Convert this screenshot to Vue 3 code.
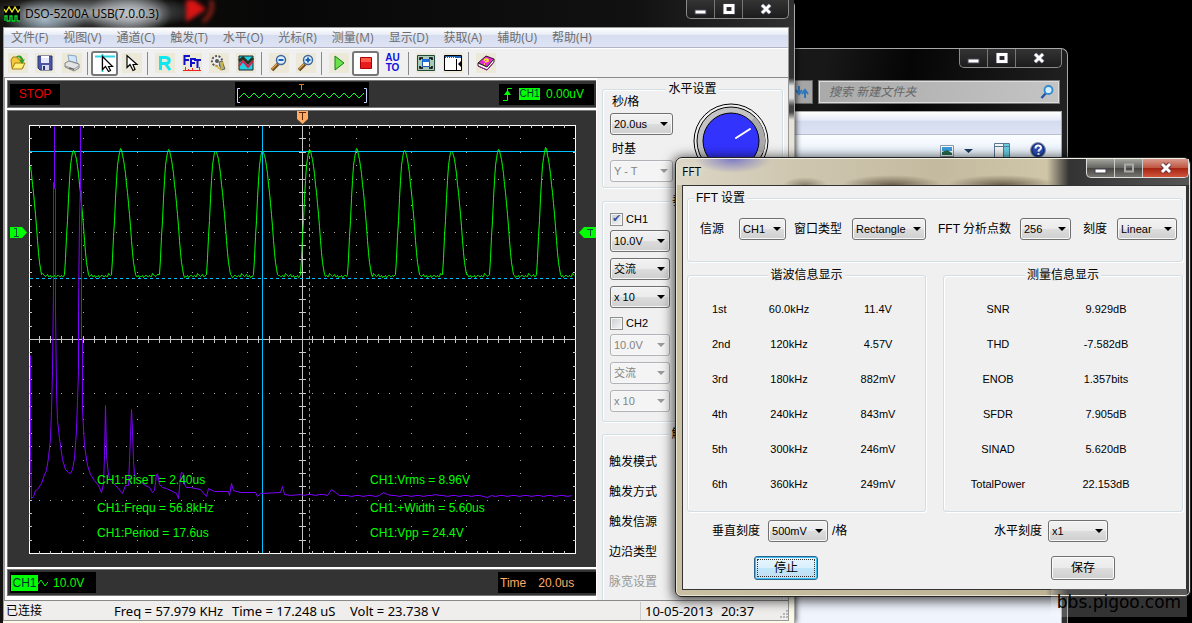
<script setup>
import { ref } from 'vue'

const menus = ['文件(F)', '视图(V)', '通道(C)', '触发(T)', '水平(O)', '光标(R)', '测量(M)', '显示(D)', '获取(A)', '辅助(U)', '帮助(H)']

const harmonics = [
  ['1st', '60.0kHz', '11.4V'],
  ['2nd', '120kHz', '4.57V'],
  ['3rd', '180kHz', '882mV'],
  ['4th', '240kHz', '843mV'],
  ['5th', '300kHz', '246mV'],
  ['6th', '360kHz', '249mV'],
]
const measures = [
  ['SNR', '9.929dB'],
  ['THD', '-7.582dB'],
  ['ENOB', '1.357bits'],
  ['SFDR', '7.905dB'],
  ['SINAD', '5.620dB'],
  ['TotalPower', '22.153dB'],
]
const triggerLabels = ['触发模式', '触发方式', '触发信源', '边沿类型']
const ch1 = ref(true)
const ch2 = ref(false)

// Graticule: 10 x 8 divisions, 5 and 4 minor steps in each
const left = 29, top = 125
const xs = Array.from({ length: 49 }, (_, i) => Math.round(left - 1 + (i + 1) * 10.94))
const ys = Array.from({ length: 31 }, (_, i) => Math.round(top + (i + 1) * 13.38))
let ticks = ''
for (const x of xs) ticks += `M${x}.5 125v3M${x}.5 336v7M${x}.5 551v3`
for (const y of ys) ticks += `M29 ${y}.5h3M299 ${y}.5h7M573 ${y}.5h3`
let dots = ''
xs.forEach((x, i) => {
  ys.forEach((y, j) => {
    const onCol = (i + 1) % 5 === 0 && i !== 24
    const onRow = (j + 1) % 4 === 0 && j !== 15
    if (onCol || onRow) dots += `M${x} ${y}.5h1`
  })
})

// Channel 1: pulses rising and falling around each peak, small ripple between
const pulse = [[-9, 274], [-8, 258], [-7, 236], [-6, 220], [-5, 198], [-4, 180], [-3, 165], [-2, 158], [-1, 152], [0, 0], [1, 1], [2, 155], [3, 159], [4, 166], [5, 173], [6, 184], [7, 192], [8, 203], [9, 214], [10, 226], [11, 240], [12, 252], [13, 262], [14, 268], [15, 274]]
const tops = [150, 150, 148, 149, 151, 151, 149, 148, 150, 151, 149, 147]
const ripple = [273, 274, 275, 276, 275, 274, 276, 276, 275, 277, 276, 276, 275, 277, 276, 275, 275, 276, 276, 275, 276, 276]
const wave = []
tops.forEach((peakY, n) => {
  const cx = Math.round(26 + n * 47.2)
  for (const [dx, y] of pulse) {
    const x = cx + dx
    if (x >= 30 && x <= 574) wave.push(`${x}.5,${y < 2 ? peakY + y : y}.5`)
  }
  for (let k = 0; k < 22; k++) {
    const x = cx + 16 + k
    if (x <= 574) wave.push(`${x}.5,${ripple[(k + n * 3) % 22]}.5`)
  }
})
const wavePoints = wave.join(' ')

const spectrumHead = [
  [30, 355], [30, 450], [31, 498], [33, 496], [35, 490], [37, 489], [41, 483], [44, 474], [46, 470], [48, 457], [50, 438], [51, 410], [52, 370],
  [53, 290], [53, 182], [54, 182], [54, 126], [54, 188], [55, 188], [55, 310], [56, 390], [57, 420], [59, 438], [62, 459], [65, 469], [68, 472], [70, 473],
  [72, 469], [74, 458], [76, 430], [77, 400], [78, 370], [78, 310], [79, 220], [80, 184], [80, 126], [80, 190], [81, 190], [81, 338], [82, 338], [82, 410], [84, 445], [87, 465],
  [90, 474], [94, 480], [98, 485], [101, 492], [103, 483], [104, 455], [105, 405], [106, 455], [108, 475], [110, 480], [114, 484],
  [118, 488], [122, 493], [125, 485], [128, 485], [129, 460], [130, 435], [131, 409], [132, 430], [133, 460], [134, 475], [138, 480],
  [145, 485], [149, 487], [152, 492], [154, 490], [156, 474], [157, 473], [159, 484], [162, 487], [166, 488], [172, 491], [176, 493],
  [178, 498], [180, 476], [181, 472], [183, 473], [184, 484], [186, 487], [190, 487], [200, 489], [206, 496], [208, 488], [214, 491],
  [228, 491], [229, 495], [231, 483], [233, 490], [240, 492], [255, 492], [257, 496], [260, 493], [280, 492], [282, 486], [284, 494],
  [290, 495], [300, 494],
]
const bumps = { 331: -5, 335: -2, 383: -3, 387: -2, 435: -2, 487: 2 }
const tail = []
for (let x = 303; x <= 571; x += 4) {
  tail.push([x, (x < 340 ? 494 : 495) + (bumps[x] || 0) + ((x * 7) % 3 === 0 ? 1 : 0)])
}
const spectrumPoints = [...spectrumHead, ...tail].map(([x, y]) => `${x}.5,${y}.5`).join(' ')

const readouts = [
  [97, 484, 'CH1:RiseT = 2.40us'], [370, 484, 'CH1:Vrms = 8.96V'],
  [97, 512, 'CH1:Frequ = 56.8kHz'], [370, 512, 'CH1:+Width = 5.60us'],
  [97, 537, 'CH1:Period = 17.6us'], [370, 537, 'CH1:Vpp = 24.4V'],
]
const preview = Array.from({ length: 26 }, (_, i) => `${4 + i * 5},${i % 2 ? 11 : 16}`).join(' ')
</script>

<template>
  <main class="desktop">
    <!-- File browser -->
    <section class="explorer">
      <div class="caption">
        <button type="button" aria-label="最小化"><svg width="14" height="12"><rect x="1" y="7" width="11" height="4" fill="#fff" stroke="#445" /></svg></button>
        <button type="button" aria-label="最大化"><svg width="14" height="12"><path d="M3 2.500h8v7H3z" fill="none" stroke="#445" stroke-width="4" /><path d="M3 2.500h8v7H3z" fill="none" stroke="#fff" stroke-width="3" /></svg></button>
        <button type="button" class="close" aria-label="关闭"><svg width="14" height="12"><path d="M3 2l8 8M11 2l-8 8" stroke="#445" stroke-width="5" /><path d="M3 2l8 8M11 2l-8 8" stroke="#fff" stroke-width="3" /></svg></button>
      </div>
      <div class="address">
        <button type="button" class="refresh" aria-label="刷新"><svg width="14" height="16"><path d="M4 2v7M1 6l3 4 3-4M10 14V8M7 10l3-4 3 4" fill="none" stroke="#2f77bd" stroke-width="2" /></svg></button>
        <div class="search">
          <input type="text" aria-label="搜索" placeholder="搜索 新建文件夹" />
          <svg width="14" height="14"><path d="M6 8L1.500 13" stroke="#2456a5" stroke-width="2.500" /><circle cx="8.500" cy="5" r="4" fill="#d5efff" stroke="#2f8ad0" stroke-width="1.800" /></svg>
        </div>
      </div>
      <div class="explorer-body">
        <div class="ex-menu"></div>
        <div class="ex-tools">
          <svg width="14" height="14"><path d="M.5 2.500h13v11h-13z" fill="#fff" stroke="#8a9aac" /><path d="M2 4h10v4H2z" fill="#3c9de0" /><path d="M2 9l5-2 5 3v2H2z" fill="#256e52" /></svg>
          <svg width="9" height="14"><path d="M0 6h9l-4.500 4z" fill="#1e3c66" /></svg>
          <svg class="pane" width="16" height="16"><path d="M.5 1.500h15v14H.5z" fill="#f8f8f8" stroke="#5b7795" /><path d="M10 2h5v13h-5z" fill="#69d0e4" /><path d="M0 4.500h16M9.500 2v14" stroke="#5b7795" /></svg>
          <svg width="16" height="16"><circle cx="8" cy="8" r="7.500" fill="#2b4fb5" stroke="#999" /><circle cx="8" cy="8" r="6" fill="none" stroke="#15276e" /><path d="M5.500 6.500c0-4 5.500-3.500 5.500-.8 0 2-2.500 1.800-2.500 4M8.500 11v2" fill="none" stroke="#fff" stroke-width="2" /></svg>
        </div>
      </div>
    </section>

    <!-- Oscilloscope -->
    <section class="scope">
      <header class="scope-title">
        <svg width="16" height="16"><rect width="16" height="16" fill="#000" /><path d="M0 3l2 3 3-5 3 5 3-5 3 5 2-3" fill="none" stroke="#ee2" stroke-width="1.300" /><path d="M1 15v-5h2v5h3v-5h2v5h3v-5h2v5h3" fill="none" stroke="#1d3" stroke-width="1.300" /></svg>
        <h1>DSO-5200A USB(7.0.0.3)</h1>
        <svg class="backdrop" width="60" height="27"><path d="M27 0h8l12 9-20 13z" fill="#d81414" /><path d="M52 0q4 12-8 22" fill="none" stroke="#8b2016" stroke-width="4" /></svg>
        <div class="caption">
          <button type="button" aria-label="最小化"><svg width="14" height="12"><rect x="1" y="7" width="11" height="4" fill="#fff" stroke="#445" /></svg></button>
          <button type="button" aria-label="最大化"><svg width="14" height="12"><path d="M3 2.500h8v7H3z" fill="none" stroke="#445" stroke-width="4" /><path d="M3 2.500h8v7H3z" fill="none" stroke="#fff" stroke-width="3" /></svg></button>
          <button type="button" class="close" aria-label="关闭"><svg width="14" height="12"><path d="M3 2l8 8M11 2l-8 8" stroke="#445" stroke-width="5" /><path d="M3 2l8 8M11 2l-8 8" stroke="#fff" stroke-width="3" /></svg></button>
        </div>
      </header>
      <div class="client">
        <nav class="menu"><button v-for="m in menus" :key="m" type="button">{{ m }}</button></nav>

        <div class="toolbar">
          <button type="button" aria-label="打开"><svg width="20" height="20"><path d="M3 7l2-3h4l1 2h5v9H4z" fill="#f4c83a" stroke="#a77b12" /><path d="M4 16l3-6h10l-3 6z" fill="#fff27a" stroke="#a77b12" /><path d="M8 4c3-3 7-1 7 3l2-1-3 5-3-4 2 0c0-2-2-3-5-3z" fill="#2ca02c" /></svg></button>
          <button type="button" aria-label="保存"><svg width="20" height="20"><path d="M3 3h14v14H5l-2-2z" fill="#4a55a8" stroke="#2c3577" /><path d="M6 3h8v7H6z" fill="#e6e8ff" /><path d="M6 3h8v2H6z" fill="#fff" /><path d="M7 12h7v5H7z" fill="#d8d8e8" /><path d="M8 13h2v4H8z" fill="#2c3577" /></svg></button>
          <button type="button" aria-label="打印"><svg width="20" height="20"><path d="M6 2l8 1 1 7-8-2z" fill="#cfe6fb" stroke="#8ba6bd" /><path d="M3 10l4-2 10 3v4l-5 3-9-4z" fill="#e3e3e3" stroke="#858585" /><path d="M3 13l9 3 5-3" fill="none" stroke="#999" /><path d="M7 15l5 1.500" stroke="#555" /></svg></button>
          <i></i>
          <button type="button" class="pressed" aria-label="光标"><svg width="22" height="20"><path d="M1 3.500h20M8.500 1v18" stroke="#2fd5e5" stroke-width="2" /><path d="M8.500 3.500v13l3-3 3 5 2-1-2-4h4z" fill="#fff" stroke="#000" stroke-width="1.200" /></svg></button>
          <button type="button" aria-label="指针"><svg width="20" height="20"><path d="M5 2.500v12l3-3 3 6 2-1-2-5h4z" fill="#fff" stroke="#000" stroke-width="1.200" /></svg></button>
          <i></i>
          <button type="button" aria-label="R"><svg width="20" height="20"><path d="M5.500 17V4.500h5c5 0 5 6 0 6h-5M10 10l5 7" fill="none" stroke="#10e8f0" stroke-width="3" /></svg></button>
          <button type="button" aria-label="FFT"><svg width="20" height="20"><path d="M2.500 12V3H8M2 7h5M9 14V6h5M9 10h4M12 7h7M15.500 7v8" fill="none" stroke="#11c" stroke-width="2" /><path d="M1 17.500h18M3.500 18v-4M6.500 18v-2M10.500 18v-3M17.500 18v-4" stroke="#e22" /></svg></button>
          <button type="button" aria-label="设置"><svg width="20" height="20"><circle cx="8" cy="8" r="5" fill="#eee" stroke="#555" stroke-width="2" stroke-dasharray="2 1.500" /><circle cx="8" cy="8" r="2" fill="#555" /><path d="M10 9l3-1 3 8-4 1z" fill="#a4b684" stroke="#666" /><path d="M6 12l6 5M14 9l-2 8" stroke="#d6b338" stroke-width="1.500" /></svg></button>
          <button type="button" aria-label="波形"><svg width="20" height="20"><path d="M3 3h14v14H3z" fill="#21cfe4" stroke="#222" /><path d="M3 8l4-3 5 5 5-5" fill="none" stroke="#232" stroke-width="3" /><path d="M3 13l4-5 5 6 5-6" fill="none" stroke="#d22350" stroke-width="2" /></svg></button>
          <i></i>
          <button type="button" aria-label="放大"><svg width="20" height="20"><path d="M9 11l-6 6" stroke="#6b4a1f" stroke-width="3.500" /><path d="M8 11l-5 5" stroke="#e4a044" stroke-width="1.500" /><circle cx="12" cy="7" r="4.500" fill="#d9efff" stroke="#42659a" stroke-width="1.500" /><path d="M9.500 7h5" stroke="#1964b4" stroke-width="2" /></svg></button>
          <button type="button" aria-label="缩小"><svg width="20" height="20"><path d="M9 11l-6 6" stroke="#6b4a1f" stroke-width="3.500" /><path d="M8 11l-5 5" stroke="#e4a044" stroke-width="1.500" /><circle cx="12" cy="7" r="4.500" fill="#d9efff" stroke="#42659a" stroke-width="1.500" /><path d="M9.500 7h5M12 4.500v5" stroke="#1964b4" stroke-width="2" /></svg></button>
          <i></i>
          <button type="button" aria-label="运行"><svg width="20" height="20"><path d="M6 3l9 7-9 7z" fill="#6be04b" stroke="#128212" /></svg></button>
          <button type="button" class="pressed" aria-label="停止采集"><svg width="20" height="20"><path d="M4.500 4.500h11v11h-11z" fill="#e81c1c" stroke="#a00" /><path d="M5 5h10v4H5z" fill="#ff5a4c" /></svg></button>
          <button type="button" class="auto"><span>AU</span><span>TO</span></button>
          <i></i>
          <button type="button" aria-label="全屏"><svg width="20" height="20"><path d="M1.500 2.500h17v15h-17z" fill="#a9c9b8" stroke="#23493c" /><path d="M4 7V5h3M13 5h3v2M4 13v2h3M16 13v2h-3" fill="none" stroke="#000" stroke-width="1.500" /><path d="M6.500 6.500h7v7h-7z" fill="#fff" stroke="#1a56b8" /><path d="M6 6h8v3H6z" fill="#1a70d8" /></svg></button>
          <button type="button" aria-label="侧栏"><svg width="20" height="20"><path d="M1.500 2.500h17v15h-17z" fill="#fff" stroke="#000" /><path d="M2 3h16v2H2z" fill="#1b64b5" /><path d="M3 4.500h10" stroke="#fff" stroke-dasharray="1 1" /><path d="M13.500 6v11" stroke="#000" /><path d="M18 8v6l-3-3z" /></svg></button>
          <i></i>
          <button type="button" aria-label="帮助主题"><svg width="20" height="20"><path d="M2 10l8-7 8 3-7 8z" fill="#ed28d4" stroke="#222" /><path d="M2 10v3l9 4 7-8V6l-7 8z" fill="#fff" stroke="#222" /><path d="M2 13l9 4 7-8" fill="none" stroke="#9b1e8b" /><path d="M8 8c1-3 5-2 4 0l-3 1M8 11h1" fill="none" stroke="#f5e82a" stroke-width="1.600" /></svg></button>
        </div>

        <div class="work">
          <div class="display">
            <div class="strip">
              <span class="stop">STOP</span>
              <svg class="preview" width="134" height="24"><polyline :points="preview" fill="none" stroke="#0f2" /><path d="M5 6.500H2.500v14H5M129 6.500h2.500v14H129" fill="none" stroke="#c5d2ff" /><path d="M64 2.500h5M66.500 3v5" stroke="#e07830" /></svg>
              <span class="level"><svg width="10" height="16"><path d="M0 14.500h4.500v-12H9" fill="none" stroke="#0f0" /><path d="M1 9l3.500-5L8 9z" fill="#0f0" /></svg><b>CH1</b><span>0.00uV</span></span>
            </div>
            <div class="plot">
              <svg class="trace" viewBox="7 110 589 457" preserveAspectRatio="xMidYMid meet">
                <rect x="29.500" y="125.500" width="546" height="428" fill="#000" stroke="#fff" />
                <path d="M29 339.500h547M302.500 125v429" stroke="#c8c8c8" />
                <path :d="ticks" stroke="#c8c8c8" />
                <path :d="dots" stroke="#aaa" />
                <path d="M30 151.500h545M262.500 126v427" stroke="#00c0ff" />
                <path d="M30 278.500h545M309.500 126v427" stroke="#00c0ff" stroke-dasharray="3 3" />
                <polyline :points="wavePoints" class="line" stroke="#0f0" />
                <polyline :points="spectrumPoints" class="line" stroke="#8000ff" />
                <text v-for="r in readouts" :key="r[2]" :x="r[0]" :y="r[1]">{{ r[2] }}</text>
                <path d="M297 111h11v8l-5.500 5-5.500-5z" fill="#ffab64" />
                <path d="M299 112.500h7M302.500 113v7" stroke="#5a2400" />
                <path d="M10 227h12l5 5.500-5 5.500H10z" fill="#0f0" />
                <path d="M14 228.500h3M16.500 228v8M14 236.500h5" stroke="#053" />
                <path d="M596 227h-12l-5 5.500 5 5.500h12z" fill="#0f0" />
                <path d="M587 229.500h6M590.500 229v7" stroke="#053" />
              </svg>
            </div>
            <div class="strip foot">
              <span class="chan"><b>CH1</b><svg width="10" height="10"><path d="M0 6l3-4 4 6 3-4" fill="none" stroke="#0f0" /></svg><span>10.0V</span></span>
              <span class="timebase"><span>Time</span><span>20.0us</span></span>
            </div>
          </div>

          <aside class="panel">
            <fieldset class="horizontal">
              <legend>水平设置</legend>
              <div class="fields">
                <label for="tdiv">秒/格</label>
                <span class="combo"><select id="tdiv"><option>20.0us</option></select></span>
                <label for="tbase">时基</label>
                <span class="combo off"><select id="tbase" disabled><option>Y - T</option></select></span>
              </div>
              <svg class="knob" width="76" height="76"><circle cx="38" cy="38" r="37" fill="#f0f0f0" stroke="#000" /><circle cx="38" cy="38" r="34" fill="#c4c4c4" stroke="#000" /><path d="M38 38L62 14a34 34 0 0 1 8 36z" fill="#aaa" /><circle cx="38" cy="38" r="28" fill="#3333fe" stroke="#000" /><path d="M43 35l14-9" stroke="#fff" stroke-width="2" stroke-linecap="round" /></svg>
            </fieldset>
            <fieldset class="vertical">
              <legend>垂直设置</legend>
              <label class="check"><input v-model="ch1" type="checkbox" />CH1</label>
              <span class="combo"><select aria-label="CH1 电压"><option>10.0V</option></select></span>
              <span class="combo"><select aria-label="CH1 耦合"><option>交流</option></select></span>
              <span class="combo"><select aria-label="CH1 探头"><option>x 10</option></select></span>
              <label class="check second"><input v-model="ch2" type="checkbox" />CH2</label>
              <span class="combo off"><select aria-label="CH2 电压" disabled><option>10.0V</option></select></span>
              <span class="combo off"><select aria-label="CH2 耦合" disabled><option>交流</option></select></span>
              <span class="combo off"><select aria-label="CH2 探头" disabled><option>x 10</option></select></span>
            </fieldset>
            <fieldset class="trigger">
              <legend>触发设置</legend>
              <p v-for="t in triggerLabels" :key="t">{{ t }}</p>
              <p class="dim">脉宽设置</p>
            </fieldset>
          </aside>
        </div>

        <footer class="status">
          <span class="state">已连接</span>
          <span class="freq">Freq = 57.979 KHz</span>
          <span class="time">Time = 17.248 uS</span>
          <span class="volt">Volt = 23.738 V</span>
          <span class="clock"><span>10-05-2013</span><span>20:37</span></span>
          <svg width="10" height="10"><path d="M8 1h2M5 4h2M8 4h2M2 7h2M5 7h2M8 7h2" stroke="#b8b8b8" stroke-width="2" /></svg>
        </footer>
      </div>
    </section>

    <!-- FFT dialog -->
    <section class="dialog">
      <header class="dialog-title">
        <h2>FFT</h2>
        <div class="caption active">
          <button type="button" aria-label="最小化"><svg width="14" height="12"><rect x="1" y="7" width="11" height="4" fill="#fff" stroke="#445" /></svg></button>
          <button type="button" aria-label="最大化" disabled><svg width="14" height="12"><path d="M3 2.500h8v7H3z" fill="none" stroke="#aaa" stroke-width="2" /></svg></button>
          <button type="button" class="close" aria-label="关闭"><svg width="14" height="12"><path d="M3 2l8 8M11 2l-8 8" stroke="#634" stroke-width="5" /><path d="M3 2l8 8M11 2l-8 8" stroke="#fff" stroke-width="3" /></svg></button>
        </div>
      </header>
      <div class="dialog-body">
        <fieldset class="settings">
          <legend>FFT 设置</legend>
          <div class="setrow">
            <label for="src">信源</label>
            <span class="combo w47"><select id="src"><option>CH1</option></select></span>
            <label for="win">窗口类型</label>
            <span class="combo w74"><select id="win"><option>Rectangle</option></select></span>
            <label for="pts">FFT 分析点数</label>
            <span class="combo w51"><select id="pts"><option>256</option></select></span>
            <label for="scale">刻度</label>
            <span class="combo w60"><select id="scale"><option>Linear</option></select></span>
          </div>
        </fieldset>
        <div class="results">
          <fieldset>
            <legend>谐波信息显示</legend>
            <table class="harm">
              <colgroup><col class="c1" /><col class="c2" /><col /></colgroup>
              <tbody><tr v-for="h in harmonics" :key="h[0]"><th scope="row">{{ h[0] }}</th><td>{{ h[1] }}</td><td class="amp">{{ h[2] }}</td></tr></tbody>
            </table>
          </fieldset>
          <fieldset>
            <legend>测量信息显示</legend>
            <table class="meas">
              <tbody><tr v-for="m in measures" :key="m[0]"><th scope="row">{{ m[0] }}</th><td>{{ m[1] }}</td></tr></tbody>
            </table>
          </fieldset>
        </div>
        <div class="actions">
          <div class="act-left">
            <div class="pair"><label for="vs">垂直刻度</label><span class="combo w60"><select id="vs"><option>500mV</option></select></span><span class="unit">/格</span></div>
            <button type="button" class="push default"><span>停止</span></button>
          </div>
          <div class="act-right">
            <div class="pair"><label for="hs">水平刻度</label><span class="combo w60"><select id="hs"><option>x1</option></select></span></div>
            <button type="button" class="push"><span>保存</span></button>
          </div>
        </div>
      </div>
    </section>
    <div class="watermark">bbs.pigoo.com</div>
  </main>
</template>

<style>
body { background: #000; }
</style>

<style scoped>
.desktop { position: relative; height: 100vh; min-height: 623px; overflow: hidden; background: #000; font: 12px/16px "Liberation Sans", "Noto Sans CJK SC", sans-serif; color: #000; }
.desktop * { box-sizing: border-box; }
svg { display: block; flex: none; }
h1, h2, p { margin: 0; font-weight: normal; }
button, select, input { font: inherit; color: inherit; }
button { padding: 0; border: 0; background: none; }

/* caption buttons */
.caption { display: flex; width: 103px; height: 19px; margin-left: auto; border: 1px solid #8a8a8a; border-top: 0; border-radius: 0 0 5px 5px; background: linear-gradient(#343434, #1c1c1c); }
.caption button { flex: 0 0 28px; display: flex; align-items: center; justify-content: center; border-right: 1px solid #777; }
.caption .close { flex: 1; border-right: 0; }
.caption.active { background: linear-gradient(#a6a6a0, #62625e 50%, #46443f 50%, #77756f); border-color: #ddd; }
.caption.active button { border-color: #ccc; }
.caption.active .close { border-radius: 0 0 4px 0; background: linear-gradient(#d99a8c, #c05844 48%, #a32210 50%, #d0553b); }

/* explorer */
.explorer { position: absolute; left: 600px; right: 124px; top: 48px; bottom: 0; display: flex; flex-direction: column; border: 1px solid #a8a8a8; border-bottom: 0; border-radius: 0 7px 0 0; padding: 0 5px 0 0; background: linear-gradient(100deg, #181818 40%, #050505 55%, #303030); }
.explorer .caption { flex: none; }
.address { display: flex; gap: 5px; height: 24px; margin: 12px 2px 0 0; padding-left: 190px; }
.refresh { width: 22px; display: flex; align-items: center; justify-content: center; background: #a5a5a5; border: 1px solid #666; }
.search { flex: 1; display: flex; align-items: center; height: 24px; padding: 0 4px 0 9px; border: 2px solid #777; outline: 1px solid #ddd; outline-offset: -2px; background: linear-gradient(90deg, #aaa, #c4c4c4); }
.search input { flex: 1; min-width: 0; border: 0; padding: 0; background: none; font-style: italic; }
.search input::placeholder { color: #666; opacity: 1; }
.explorer-body { flex: 1; display: flex; flex-direction: column; margin-top: 7px; border: 1px solid #aaa; border-bottom: 0; background: #f0f4fd; }
.ex-menu { height: 23px; background: linear-gradient(#fff, #e6eaf6 38%, #d5dcef 40%, #dde3f4); border-bottom: 1px solid #b6bed0; }
.ex-tools { display: flex; align-items: center; justify-content: flex-end; gap: 10px; height: 30px; padding: 0 15px 0 0; background: linear-gradient(#fbfdff, #e2effc); }
.ex-tools .pane { margin: 0 10px 0 11px; }

/* scope window */
.scope { position: absolute; left: 0; right: 397px; top: 0; bottom: 0; display: flex; flex-direction: column; border-right: 1px solid #aaa; border-radius: 0 6px 0 0; padding: 0 5px 2px 3px;
  background: linear-gradient(90deg, #141210 0 3px, transparent 3px), linear-gradient(#333 0, #333 78px, #ddd 86px, #ddd 98px, #444 106px, #444 112px, #e6e2d5 120px, #fbfae6 100%); box-shadow: 0 0 6px #000; }
.scope-title { display: flex; align-items: center; height: 27px; margin: 0 -5px 0 -3px; padding: 0 5px 0 4px; overflow: hidden;
  background: radial-gradient(ellipse 40px 22px at 45px 20px, #9fb4c2, transparent), radial-gradient(ellipse 42px 24px at 130px 14px, #c5ccd2, transparent), radial-gradient(ellipse 110px 18px at 95px 12px, #8a8f94, transparent), linear-gradient(90deg, #16130f, #070707 35%, #111 80%, #303030); }
.scope-title h1 { margin-left: 5px; font: 12px/16px "Open Sans", sans-serif; text-shadow: 0 0 4px #ccc, 0 0 8px #bbb; }
.scope-title .backdrop { filter: blur(2px); }
.scope-title .caption { align-self: flex-start; }
.client { flex: 1; min-height: 0; display: flex; flex-direction: column; border: 1px solid #999; background: #f0f0f0; }
.menu { flex: none; display: flex; height: 20px; background: linear-gradient(#fff, #e8ecf7 35%, #d6ddef 38%, #dee4f4); border-bottom: 1px solid #b0b4c4; }
.menu button { flex: none; padding: 0 8px 0 7px; font: 12px/19px "Open Sans", "Noto Sans CJK SC", sans-serif; color: #6d6d6d; }
.toolbar { flex: none; display: flex; align-items: center; height: 30px; border-top: 1px solid #fff; border-bottom: 1px solid #8a8a8a; }
.toolbar button { flex: none; display: flex; align-items: center; justify-content: center; width: 27px; height: 25px; }
.toolbar button > svg { background: #ece9d8; }
.toolbar .pressed { border: 2px solid #777; border-radius: 3px; background: #fff; }
.toolbar .pressed > svg { background: #fff; }
.toolbar i { flex: none; width: 6px; height: 23px; border-left: 1px solid #888; margin: 0 -2px 0 2px; }
.toolbar .auto { flex-direction: column; font: bold 10px/10px "Liberation Sans", sans-serif; color: #11d; }
.work { flex: 1; min-height: 0; display: flex; }
.display { flex: 1; min-width: 0; display: flex; flex-direction: column; padding: 2px 1px 0 2px; background: #fff; border-left: 1px solid #999; }
.strip { flex: none; display: flex; align-items: center; justify-content: space-between; height: 28px; padding: 0 2px; background: #333; border: 1px solid #777; border-right: 0; }
.strip b { font-weight: normal; color: #033; background: #0f0; }
.stop { width: 50px; line-height: 21px; background: #000; color: #e00; text-align: center; }
.preview { margin-left: 44px; background: #000; }
.level { display: flex; align-items: center; gap: 6px; width: 95px; height: 21px; padding-left: 4px; background: #000; color: #0f0; }
.level b { width: 21px; font-size: 10px; line-height: 12px; text-align: center; }
.plot { flex: 1; min-height: 0; margin: 2px 0; background: #333; box-shadow: inset 1px 1px #777; }
.trace { width: 100%; height: 100%; }
.trace text { font: 12px "Liberation Sans", sans-serif; fill: #0f0; }
.trace .line { fill: none; stroke-linejoin: bevel; }
.foot { height: 27px; margin-bottom: 4px; padding-right: 0; }
.chan { display: flex; align-items: center; width: 86px; height: 21px; background: #000; color: #0f0; }
.chan b { width: 27px; margin-left: 1px; text-align: center; }
.chan > span { margin-left: 5px; }
.timebase { display: flex; align-items: center; gap: 12px; width: 98px; height: 21px; padding-left: 2px; background: #000; color: #ffab64; }

fieldset { position: relative; min-width: 0; margin: 0; padding: 0; border: 1px solid #d3dde4; border-radius: 3px; box-shadow: inset 1px 1px #fff, 1px 1px #fff; }
legend { height: 16px; margin: 0 auto; padding: 0 2px; background: #f0f0f0; }
.panel { flex: none; width: 191px; display: flex; flex-direction: column; padding: 3px 5px 0; background: #f0f0f0; overflow: hidden; }
.panel fieldset { flex: none; }
.panel .horizontal { display: flex; height: 107px; }
.horizontal .fields { width: 63px; margin-left: 7px; margin-top: -3px; display: flex; flex-direction: column; }
.horizontal label { padding-left: 2px; line-height: 16px; }
.horizontal .combo { margin: 3px 0 6px; }
.horizontal .knob { margin: 6px 0 0 20px; }
.panel .vertical { height: 229px; margin-top: 5px; padding-left: 7px; }
.vertical .combo { width: 60px; margin-bottom: 6px; }
.check { display: flex; align-items: center; gap: 3px; height: 18px; margin: 1px 0 2px; font-size: 11px; }
.check.second { margin-top: 3px; }
.check input { appearance: none; width: 13px; height: 13px; margin: 0; border: 1px solid #8e8f8f; outline: 1px solid #f4f4f4; outline-offset: -2px; background: linear-gradient(135deg, #c8cdd2, #f6f6f6); }
.check input:checked::after { content: "✔"; display: block; font: 11px/10px "DejaVu Sans", sans-serif; color: #3b5599; text-align: center; }
.panel .trigger { flex: 1 0 176px; margin-top: 4px; padding: 12px 0 0 6px; }
.trigger p { height: 30px; line-height: 16px; }
.trigger .dim { color: #999; }

.combo { position: relative; display: block; height: 22px; }
.combo::after { content: ""; position: absolute; right: 5px; top: 9px; border: 4px solid transparent; border-top-color: #000; border-bottom: 0; pointer-events: none; }
.combo select { appearance: none; display: block; width: 100%; height: 22px; margin: 0; padding: 0 0 0 3px; border: 1px solid #707070; border-radius: 3px; box-shadow: inset 0 0 0 1px #f8f8f8; background: linear-gradient(#f2f2f2, #ebebeb 48%, #dddddd 50%, #cfcfcf); font-size: 11px; line-height: 20px; color: #000; opacity: 1; }
.combo.off select { border-color: #b0b4b8; background: #f4f4f4; color: #838383; }
.combo.off::after { border-top-color: #999; }

.status { flex: none; display: flex; align-items: center; height: 20px; border-top: 1px solid #888; background: #f0eded; font: 13px/18px "Noto Sans", "Noto Sans CJK SC", sans-serif; padding-left: 2px; white-space: nowrap; }
.status .state { width: 108px; font-size: 12px; }
.status .freq { width: 118px; }
.status .time { width: 118px; }
.status .volt { flex: 1; }
.status .clock { display: flex; gap: 8px; width: 138px; padding-left: 4px; border-left: 1px solid #ccc; }
.status svg { margin: 8px 0 0; }

/* dialog */
.dialog { position: absolute; left: 675px; right: 1px; top: 157px; display: flex; flex-direction: column; padding: 0 3px 6px 6px; border: 1px solid #222; border-radius: 7px 7px 6px 6px; box-shadow: inset 0 0 0 1px #e8e4d4, 0 2px 12px 2px rgba(0, 0, 0, .7);
  background: linear-gradient(90deg, #c9bfa3 0, #beb295 370px, #222 392px, #333 100%); }
.dialog-title { display: flex; align-items: center; height: 27px; margin: 0 -2px 0 -5px; padding-left: 5px; border-radius: 6px 6px 0 0; border-top: 1px solid #f2efe5;
  background: radial-gradient(ellipse 38px 14px at 56px 0, #7d7bc4, transparent), radial-gradient(ellipse 22px 8px at 128px 26px, #8c8270, transparent), radial-gradient(ellipse 50px 10px at 215px 26px, #6a604c, transparent), radial-gradient(ellipse 55px 10px at 325px 26px, #6a604c, transparent), linear-gradient(90deg, #dcd6c6, #cfc7b0 110px, #c4baa0 260px, #cfc5a7 370px, #333 392px, #555 100%); }
.dialog-title h2 { font: 12px/16px "Open Sans", sans-serif; text-shadow: 0 0 6px #fff; }
.dialog-title .caption { align-self: flex-start; margin-right: 0; }
.dialog-body { border: 1px solid #333; background: #f0f0f0; padding: 4px 3px 9px 4px; }
.settings { height: 72px; }
.settings legend { margin: 0 0 0 6px; }
.setrow { display: grid; grid-template-columns: 39px 55px 58px 86px 82px 63px 34px 60px; align-items: center; padding: 12px 0 0 12px; white-space: nowrap; }
.w47 { width: 47px; } .w74 { width: 74px; } .w51 { width: 51px; } .w60 { width: 60px; }
.results { display: grid; grid-template-columns: 239px minmax(0, 1fr); gap: 17px; margin-top: 5px; }
.results fieldset { height: 245px; padding-top: 8px; }
table { width: 100%; table-layout: fixed; border-collapse: collapse; font-size: 11px; }
tr { height: 35px; }
th, td { padding: 0; font-weight: normal; text-align: center; }
.harm th { text-align: left; padding-left: 24px; }
.harm .amp { padding-left: 4px; }
.c1 { width: 63px; } .c2 { width: 76px; }
.meas { width: calc(100% - 22px); }
.actions { display: grid; grid-template-columns: 239px minmax(0, 1fr); gap: 17px; margin-top: 8px; }
.pair { display: flex; align-items: center; }
.act-left .pair { padding-left: 25px; }
.act-right .pair { padding-left: 51px; }
.act-left .pair .combo { margin: 0 4px 0 8px; }
.act-right .pair .combo { margin-left: 6px; }
.push { display: block; width: 64px; height: 24px; margin-top: 14px; padding: 2px; border: 1px solid #707070; border-radius: 3px; box-shadow: inset 0 0 0 1px #fbfbfb; background: linear-gradient(#f2f2f2, #ebebeb 48%, #ddd 50%, #cfcfcf); }
.act-left .push { margin-left: 67px; }
.act-right .push { margin-left: 108px; }
.push span { display: block; line-height: 18px; }
.push.default { border-color: #2c628b; box-shadow: inset 0 0 0 1px #3cc0f0; background: linear-gradient(#eaf6fd, #d9f0fc 48%, #bee6fd 50%, #c5dfee); }
.push.default span { border: 1px dotted #333; line-height: 16px; }

.watermark { position: absolute; right: 5px; bottom: 6px; width: 136px; height: 28px; background: rgba(255, 255, 255, .2); font: 17px/27px "DejaVu Sans", sans-serif; text-align: center; }
</style>
